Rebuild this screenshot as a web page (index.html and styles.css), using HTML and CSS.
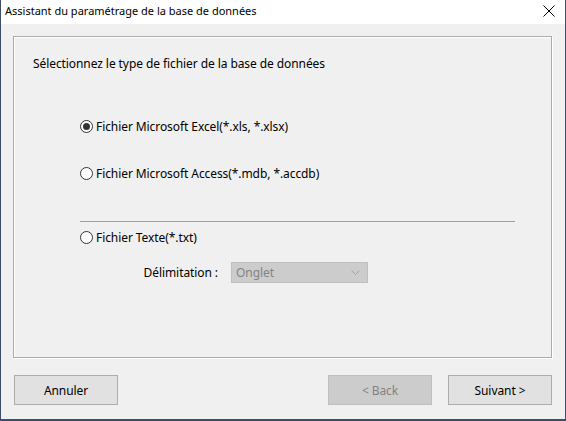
FILE: index.html
```html
<!DOCTYPE html>
<html lang="fr">
<head>
<meta charset="utf-8">
<title>Assistant du paramétrage de la base de données</title>
<link rel="stylesheet" href="styles.css">
</head>
<body>
<div class="window">
  <div class="titlebar">
    <span class="title">Assistant du paramétrage de la base de données</span>
    <span class="close">
      <svg width="12" height="12" viewBox="0 0 12 12"><path d="M0.5 0.5 L11.5 11.5 M11.5 0.5 L0.5 11.5" stroke="#000" stroke-width="1" fill="none"/></svg>
    </span>
  </div>
  <div class="content">
    <div class="group">
      <div class="heading">Sélectionnez le type de fichier de la base de données</div>
      <div class="options">
        <label class="radio r1"><span class="dot checked"></span><span class="rtext">Fichier Microsoft Excel(*.xls, *.xlsx)</span></label>
        <label class="radio r2"><span class="dot"></span><span class="rtext">Fichier Microsoft Access(*.mdb, *.accdb)</span></label>
        <div class="sep"></div>
        <label class="radio r3"><span class="dot"></span><span class="rtext">Fichier Texte(*.txt)</span></label>
        <div class="delim">
          <span class="dlabel">Délimitation :</span>
          <span class="select"><span class="sval">Onglet</span>
            <svg class="chev" width="9" height="5" viewBox="0 0 9 5"><path d="M0.5 0.5 L4.5 4.5 L8.5 0.5" stroke="#a6a6a6" fill="none"/></svg>
          </span>
        </div>
      </div>
    </div>
    <div class="buttons">
      <span class="btn">Annuler</span>
      <span class="spacer"></span>
      <span class="btn disabled">&lt; Back</span>
      <span class="btn next">Suivant &gt;</span>
    </div>
  </div>
</div>
</body>
</html>
```
FILE: styles.css
```css
html, body {
  margin: 0;
  padding: 0;
}
body {
  width: 566px;
  height: 421px;
  overflow: hidden;
  font-family: "Noto Sans", "Liberation Sans", sans-serif;
  font-size: 12px;
  letter-spacing: -0.08px;
  color: #000;
}
.window {
  box-sizing: border-box;
  width: 566px;
  height: 421px;
  background: #f0f0f0;
  border-left: 1px solid #3e4d68;
  border-right: 1px solid #3e4d68;
  border-bottom: 2px solid #3e4d68;
  display: flex;
  flex-direction: column;
}
.titlebar {
  height: 24px;
  background: #fff;
  display: flex;
  align-items: center;
  padding-left: 4px;
  padding-right: 10px;
  flex: none;
}
.title {
  flex: 1;
  font-size: 11px;
  letter-spacing: 0;
  line-height: 16px;
  margin-top: -2px;
}
.close {
  display: flex;
  width: 12px;
  height: 12px;
  margin-top: -2px;
}
.content {
  padding: 12px 13px 0 12px;
  display: flex;
  flex-direction: column;
}
.group {
  box-sizing: border-box;
  height: 322px;
  border: 1px solid #acacac;
  box-shadow: inset 1px 1px 0 #fff, 1px 1px 0 #fff;
  padding: 19px 0 0 19px;
}
.heading {
  line-height: 16px;
}
.options {
  display: flex;
  flex-direction: column;
  margin-left: 47px;
}
.radio {
  display: flex;
  align-items: center;
  height: 16px;
}
.r1 { margin-top: 46px; }
.r2 { margin-top: 31px; }
.r3 { margin-top: 7px; }
.dot {
  box-sizing: border-box;
  width: 13px;
  height: 13px;
  border: 1px solid #333;
  border-radius: 50%;
  background: #fff;
  margin-right: 3px;
  display: flex;
  align-items: center;
  justify-content: center;
}
.dot.checked::after {
  content: "";
  width: 7px;
  height: 7px;
  border-radius: 50%;
  background: #333;
}
.sep {
  width: 435px;
  height: 1px;
  background: #a0a0a0;
  margin-top: 40px;
}
.delim {
  display: flex;
  align-items: center;
  margin-top: 17px;
}
.dlabel {
  width: 138px;
  text-align: right;
  padding-right: 13px;
}
.select {
  box-sizing: border-box;
  width: 137px;
  height: 21px;
  background: #cccccc;
  border: 1px solid #bfbfbf;
  display: flex;
  align-items: center;
  justify-content: space-between;
  padding: 0 7px 0 4px;
  color: #838383;
}
.chev {
  display: block;
}
.buttons {
  display: flex;
  margin-top: 17px;
  margin-left: 1px;
}
.spacer {
  flex: 1;
}
.btn {
  box-sizing: border-box;
  width: 104px;
  height: 30px;
  background: #e1e1e1;
  border: 1px solid #adadad;
  display: flex;
  align-items: center;
  justify-content: center;
}
.btn.disabled {
  background: #cccccc;
  border-color: #bfbfbf;
  color: #838383;
}
.btn.next {
  margin-left: 16px;
}
```
